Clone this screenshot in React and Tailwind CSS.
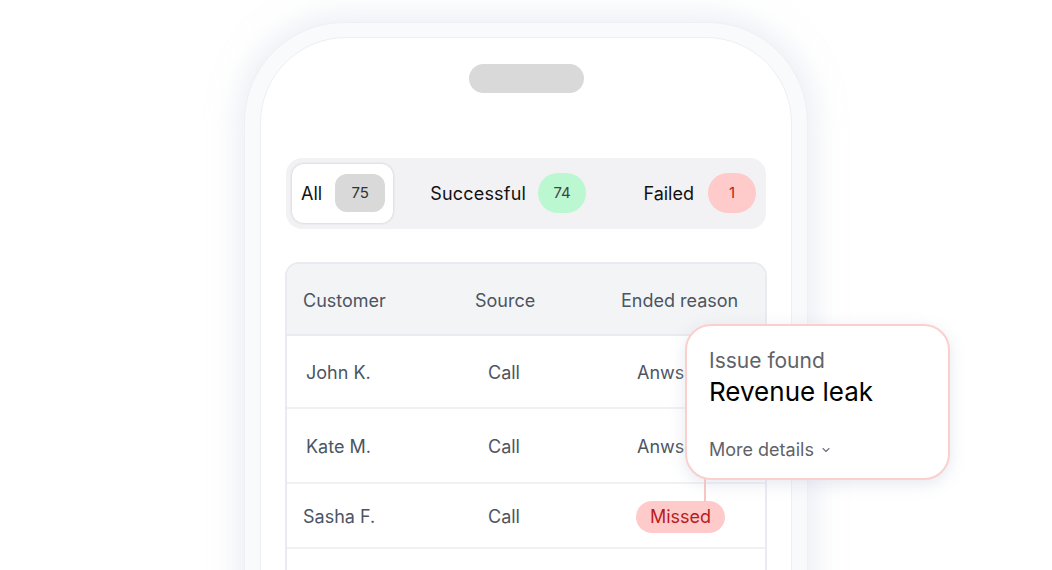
import React from "react";

const font = { fontFamily: "Inter, 'Noto Sans', Arial, sans-serif" };

function Chevron() {
  return (
    <svg width="10" height="10" viewBox="0 0 10 10" className="ml-[7px] mt-[1px]" fill="none">
      <path d="M2 3.5 L5 6.5 L8 3.5" stroke="#6b7280" strokeWidth="1.1" strokeLinecap="round" strokeLinejoin="round" />
    </svg>
  );
}

export default function App() {
  return (
    <div className="relative w-[1052px] h-[570px] overflow-hidden bg-white" style={font}>
      <div className="flex justify-center pt-[22px]">
        <div className="w-[564px] h-[600px] rounded-t-[100px] bg-[#f9fafc] border border-[#eef0f5] px-[15px] pt-[14px] shadow-[0_0_28px_8px_rgba(220,225,236,0.55)]">
          <div className="h-full rounded-t-[86px] bg-white border border-[#eceff4] px-[25px] flex flex-col">
            <div className="mx-auto mt-[26px] h-[30px] w-[115px] rounded-full bg-[#d9d9d9]" />

            <div className="mt-[65px] h-[72px] rounded-[16px] bg-[#f2f2f4] pl-[6px] pr-[2px] flex items-center">
              <div className="h-[59px] flex items-center pl-[9px] pr-[8px] bg-white rounded-[12px] shadow-[0_0_3px_rgba(0,0,0,0.18)]">
                <span className="text-[18px] text-[#111]">All</span>
                <span className="ml-[13px] w-[50px] h-[38px] rounded-[12px] bg-[#d9d9d9] flex items-center justify-center text-[15px] text-[#333]">75</span>
              </div>
              <div className="ml-[28px] h-[59px] flex items-center pl-[9px] pr-[8px]">
                <span className="text-[18px] tracking-[0.2px] text-[#111]">Successful</span>
                <span className="ml-[12px] w-[48px] h-[40px] rounded-full bg-[#bbf7d0] flex items-center justify-center text-[15px] text-[#444]">74</span>
              </div>
              <div className="ml-auto h-[59px] flex items-center pl-[9px] pr-[8px]">
                <span className="text-[18px] text-[#111]">Failed</span>
                <span className="ml-[14px] w-[48px] h-[40px] rounded-full bg-[#fecaca] flex items-center justify-center text-[15px] text-[#b91c1c]">1</span>
              </div>
            </div>

            <div className="mt-[33px] -mx-[1px] rounded-t-[14px] border-2 border-b-0 border-[#e9ebf0] overflow-hidden text-[18px] text-[#4b5563]">
              <div className="h-[72px] pt-[4px] bg-[#f3f4f6] border-b-2 border-[#e9ebf0] flex items-center pl-[16px]">
                <span className="w-[172px]">Customer</span>
                <span className="w-[146px]">Source</span>
                <span>Ended reason</span>
              </div>
              <div className="h-[73px] pt-[3px] border-b-2 border-[#f0f1f4] flex items-center pl-[19px]">
                <span className="w-[182px]">John K.</span>
                <span className="w-[149px]">Call</span>
                <span>Anwsered</span>
              </div>
              <div className="h-[75px] pt-[3px] border-b-2 border-[#f0f1f4] flex items-center pl-[19px]">
                <span className="w-[182px]">Kate M.</span>
                <span className="w-[149px]">Call</span>
                <span>Anwsered</span>
              </div>
              <div className="h-[65px] pt-[3px] border-b-2 border-[#f0f1f4] flex items-center pl-[16px]">
                <span className="w-[185px]">Sasha F.</span>
                <span className="w-[148px]">Call</span>
                <span className="h-[32px] px-[14px] rounded-full bg-[#fecaca] text-[#b91c1c] flex items-center">Missed</span>
              </div>
              <div className="h-[80px]" />
            </div>
          </div>
        </div>
      </div>

      <div className="absolute left-[704px] top-[476px] w-[2px] h-[26px] bg-[#fbc4c4]" />
      <div className="absolute left-[685px] top-[324px] w-[265px] h-[156px] rounded-[26px] border-2 border-[#fccfcf] bg-white shadow-[0_4px_16px_rgba(200,205,220,0.45)] pl-[22px] pt-[20px]">
        <div className="text-[21px] leading-[30px] text-[#5f6368]">Issue found</div>
        <div className="text-[26px] leading-[32px] text-black">Revenue leak</div>
        <div className="mt-[28px] flex items-center text-[18px] text-[#5f6368]">
          More details
          <Chevron />
        </div>
      </div>
    </div>
  );
}
